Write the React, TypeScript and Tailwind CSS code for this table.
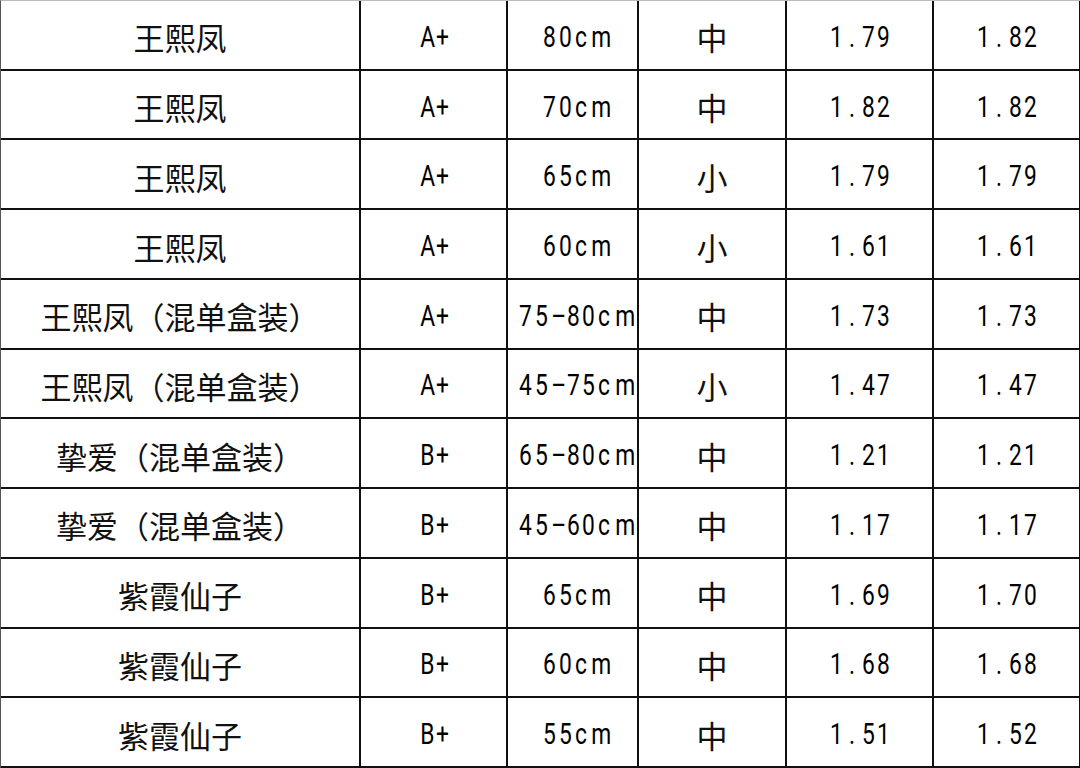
const rows: string[][] = [
  ["王熙凤", "A+", "80cm", "中", "1.79", "1.82"],
  ["王熙凤", "A+", "70cm", "中", "1.82", "1.82"],
  ["王熙凤", "A+", "65cm", "小", "1.79", "1.79"],
  ["王熙凤", "A+", "60cm", "小", "1.61", "1.61"],
  ["王熙凤（混单盒装）", "A+", "75-80cm", "中", "1.73", "1.73"],
  ["王熙凤（混单盒装）", "A+", "45-75cm", "小", "1.47", "1.47"],
  ["挚爱（混单盒装）", "B+", "65-80cm", "中", "1.21", "1.21"],
  ["挚爱（混单盒装）", "B+", "45-60cm", "中", "1.17", "1.17"],
  ["紫霞仙子", "B+", "65cm", "中", "1.69", "1.70"],
  ["紫霞仙子", "B+", "60cm", "中", "1.68", "1.68"],
  ["紫霞仙子", "B+", "55cm", "中", "1.51", "1.52"],
];

// half-width text set in fixed cells, like the SimHei latin in the picture
function Mono({ text }: { text: string }) {
  return (
    <span aria-label={text} className="inline-flex font-['Roboto','Noto_Sans',sans-serif] text-[30px] leading-none text-black">
      {text.split("").map((ch, k) => (
        <span key={k} className="inline-block w-[15.8px] text-center">
          <span className="inline-block [transform:scaleX(0.76)]">{ch === "-" ? "–" : ch}</span>
        </span>
      ))}
    </span>
  );
}

export default function App() {
  return (
    <div className="h-[768px] w-[1080px] overflow-hidden bg-white text-[#111]">
      <div className="grid h-full grid-cols-[360px_147px_131px_148px_147px_147px] grid-rows-[repeat(11,1fr)] border-l border-t border-l-[#555] border-t-[#bbb]">
        {rows.map((row, i) =>
          row.map((cell, j) => (
            <div
              key={`${i}-${j}`}
              className="flex items-center justify-center border-b-2 border-r-2 border-[#111] pt-1"
            >
              {j === 0 || j === 3 ? (
                <span className="font-['Noto_Sans_CJK_SC',sans-serif] text-[31px] leading-none">{cell}</span>
              ) : (
                <Mono text={cell} />
              )}
            </div>
          ))
        )}
      </div>
    </div>
  );
}
